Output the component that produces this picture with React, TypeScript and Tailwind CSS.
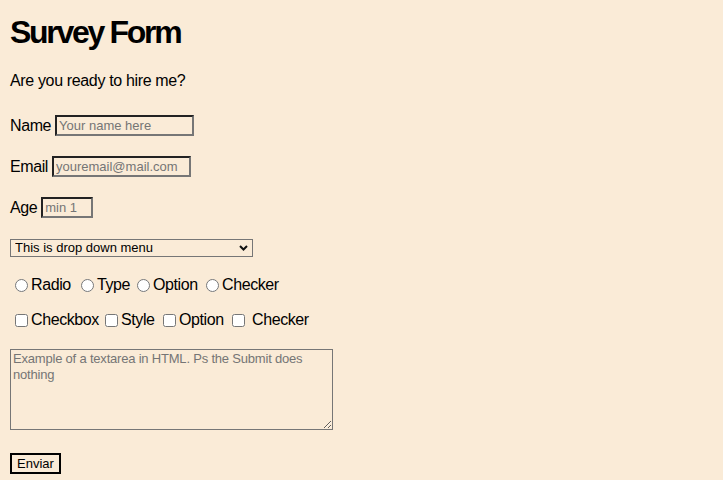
import React from "react";

export default function App() {
  return (
    <div className="min-h-screen bg-[#faebd7] pl-[10px] pt-[14px] pb-[10px] font-['Liberation_Sans',Arial,sans-serif] text-black">
      <h1 className="flex h-[37px] items-center text-[32px] font-bold leading-[37px] tracking-[-2.3px]">
        Survey Form
      </h1>
      <p className="mt-[21px] flex h-[18px] items-center text-[16px] leading-[18px] tracking-[-0.35px]">
        Are you ready to hire me?
      </p>

      <div className="mt-[25px] flex h-[21px] items-center text-[16px] tracking-[-0.4px]">
        <label htmlFor="name" className="mr-[4px]">Name</label>
        <input
          id="name"
          type="text"
          placeholder="Your name here"
          className="h-[21px] w-[139px] border-2 border-t-[#222] border-l-[#222] border-b-[#767676] border-r-[#767676] bg-transparent px-[2px] text-[13px] tracking-normal outline-none placeholder:text-[#757575]"
        />
      </div>

      <div className="mt-[20px] flex h-[21px] items-center text-[16px] tracking-[-0.4px]">
        <label htmlFor="email" className="mr-[4px]">Email</label>
        <input
          id="email"
          type="email"
          placeholder="youremail@mail.com"
          className="h-[21px] w-[139px] border-2 border-t-[#222] border-l-[#222] border-b-[#767676] border-r-[#767676] bg-transparent px-[2px] text-[13px] tracking-normal outline-none placeholder:text-[#757575]"
        />
      </div>

      <div className="mt-[20px] flex h-[21px] items-center text-[16px] tracking-[-0.4px]">
        <label htmlFor="age" className="mr-[4px]">Age</label>
        <input
          id="age"
          type="text"
          placeholder="min 1"
          className="h-[21px] w-[52px] border-2 border-t-[#222] border-l-[#222] border-b-[#767676] border-r-[#767676] bg-transparent px-[2px] text-[13px] tracking-normal outline-none placeholder:text-[#757575]"
        />
      </div>

      <div className="relative mt-[21px] h-[18px] w-[243px]">
        <select className="block h-[18px] w-[243px] appearance-none border border-[#767676] bg-transparent pl-[4px] text-[13px] leading-[16px] text-black outline-none">
          <option>This is drop down menu</option>
        </select>
        <svg
          className="pointer-events-none absolute right-[5px] top-[6px]"
          width="9"
          height="6"
          viewBox="0 0 9 6"
        >
          <path d="M1 1l3.5 3.5L8 1" fill="none" stroke="#111" strokeWidth="2" />
        </svg>
      </div>

      <div className="mt-[19px] flex h-[18px] items-center text-[16px] tracking-[-0.4px]">
        <input type="radio" name="r" className="m-0 ml-[5px] mr-[3px] h-[13px] w-[13px]" />
        <span className="w-[45px] whitespace-nowrap">Radio</span>
        <input type="radio" name="r" className="m-0 ml-[5px] mr-[3px] h-[13px] w-[13px]" />
        <span className="w-[35px] whitespace-nowrap">Type</span>
        <input type="radio" name="r" className="m-0 ml-[5px] mr-[3px] h-[13px] w-[13px]" />
        <span className="w-[48px] whitespace-nowrap">Option</span>
        <input type="radio" name="r" className="m-0 ml-[5px] mr-[3px] h-[13px] w-[13px]" />
        <span className="whitespace-nowrap">Checker</span>
      </div>

      <div className="mt-[17px] flex h-[18px] items-center text-[16px] tracking-[-0.4px]">
        <input type="checkbox" className="m-0 ml-[5px] mr-[3px] h-[13px] w-[13px]" />
        <span className="w-[69px] whitespace-nowrap">Checkbox</span>
        <input type="checkbox" className="m-0 ml-[5px] mr-[3px] h-[13px] w-[13px]" />
        <span className="w-[37px] whitespace-nowrap">Style</span>
        <input type="checkbox" className="m-0 ml-[5px] mr-[3px] h-[13px] w-[13px]" />
        <span className="w-[48px] whitespace-nowrap">Option</span>
        <input type="checkbox" className="m-0 ml-[5px] mr-[3px] h-[13px] w-[13px]" />
        <span className="ml-[4px] whitespace-nowrap">Checker</span>
      </div>

      <textarea
        placeholder="Example of a textarea in HTML. Ps the Submit does nothing"
        className="mt-[20px] block h-[81px] w-[323px] border border-[#767676] bg-transparent px-[2px] py-[1px] font-['Liberation_Sans',Arial,sans-serif] text-[13px] leading-[16px] tracking-[-0.2px] outline-none placeholder:text-[#757575]"
      />

      <button
        type="button"
        className="mt-[23px] block h-[21px] w-[51px] border-2 border-black bg-transparent text-[13px] leading-[15px] text-black"
      >
        Enviar
      </button>
    </div>
  );
}
